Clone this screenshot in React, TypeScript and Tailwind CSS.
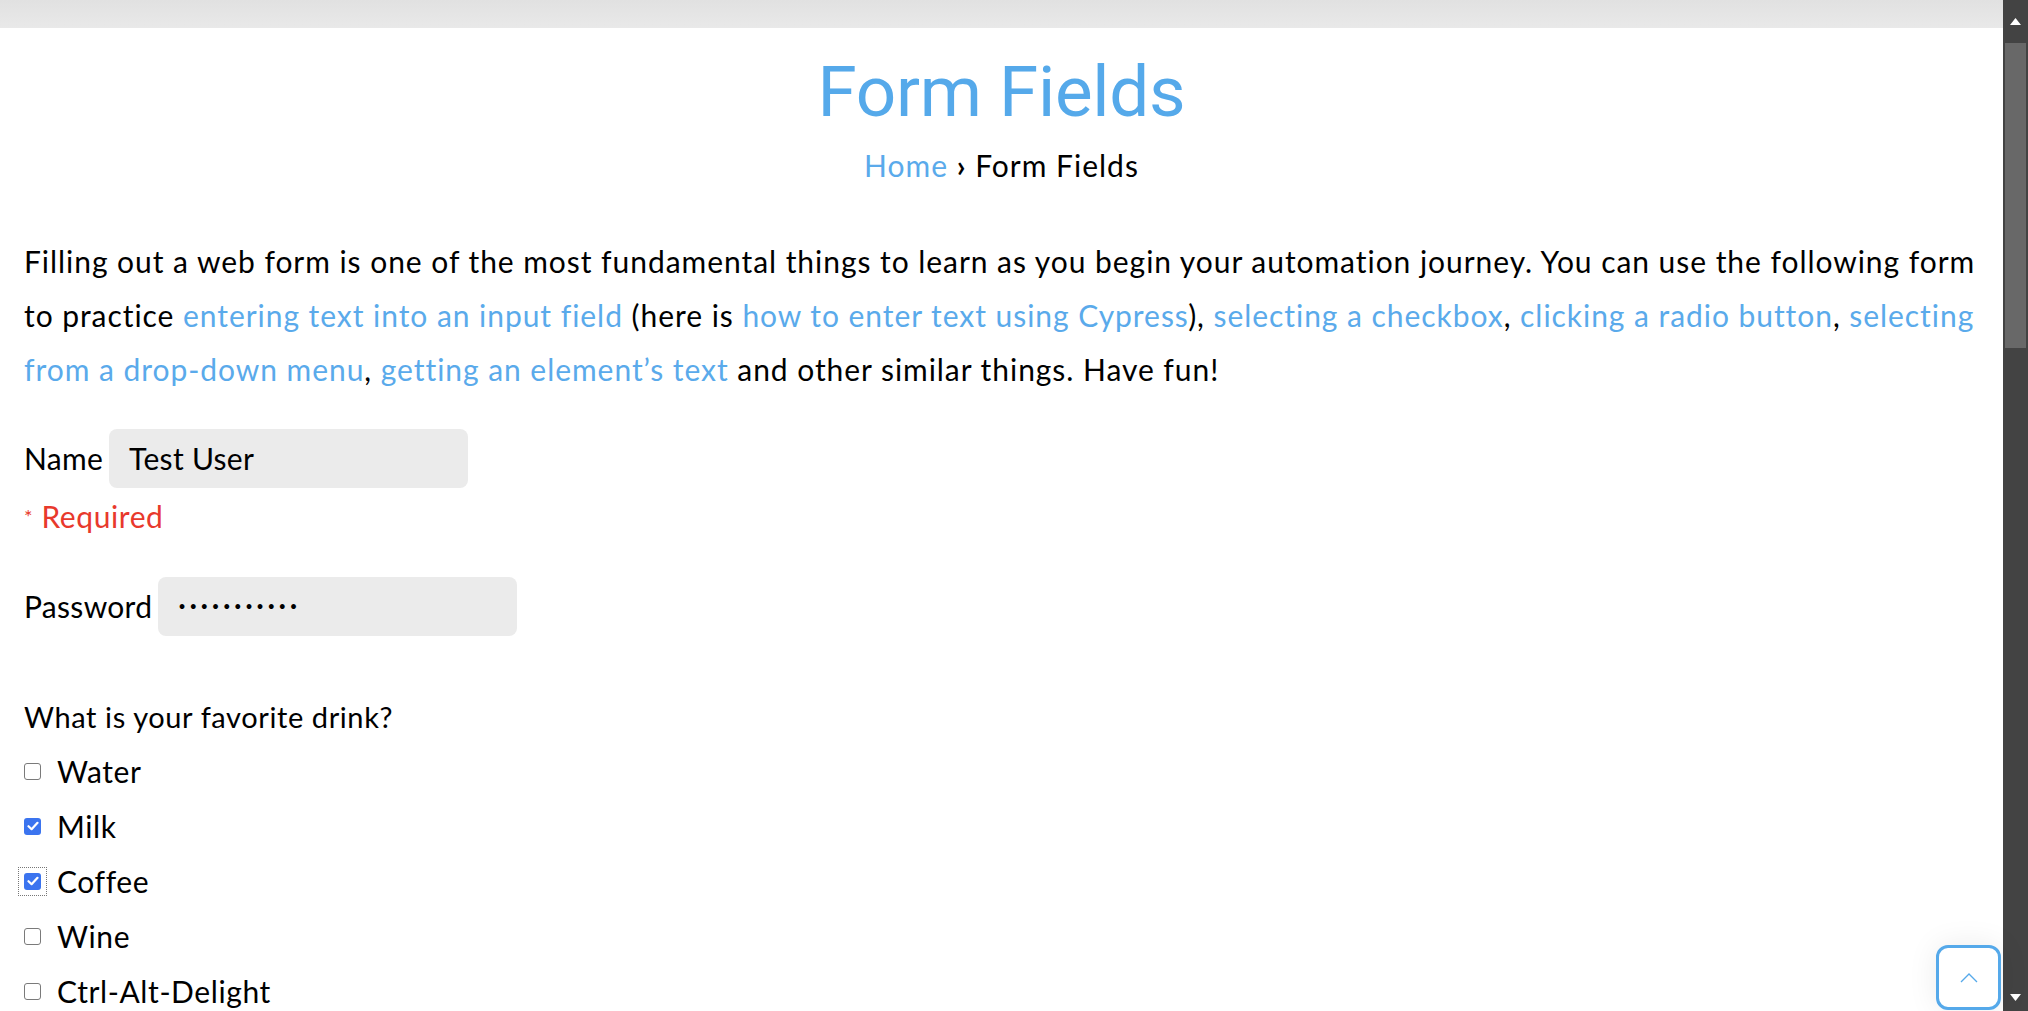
import React from 'react';

const body = { fontFamily: '"Lato", "Liberation Sans", sans-serif' };
const head = { fontFamily: 'Roboto, "Open Sans", sans-serif' };

function Link({ children }: { children: React.ReactNode }) {
  return <a className="text-[#5aaaeb]">{children}</a>;
}

function Check({ checked, focused }: { checked?: boolean; focused?: boolean }) {
  return (
    <span
      className={`flex items-center justify-center w-[27px] h-[27px] -ml-[5px] ${
        focused ? 'outline outline-1 outline-dotted outline-[#777]' : ''
      }`}
    >
      {checked ? (
        <span className="flex items-center justify-center w-[17px] h-[17px] rounded-[3px] bg-[#3b74ef]">
          <svg width="12" height="10" viewBox="0 0 12 10">
            <path d="M1.5 5.2 L4.6 8.2 L10.5 1.8" fill="none" stroke="white" strokeWidth="2.2" strokeLinecap="round" strokeLinejoin="round" />
          </svg>
        </span>
      ) : (
        <span className="w-[17px] h-[17px] rounded-[3px] border-[1.5px] border-[#7a7a7a] bg-white" />
      )}
    </span>
  );
}

export default function App() {
  const drinks = [
    { label: 'Water' },
    { label: 'Milk', checked: true },
    { label: 'Coffee', checked: true, focused: true },
    { label: 'Wine' },
    { label: 'Ctrl-Alt-Delight' },
  ];

  return (
    <div className="flex w-full h-[1011px] overflow-hidden bg-white text-black" style={body}>
      <div className="flex-1 flex flex-col relative">
        <div className="h-[28px] shrink-0 bg-gradient-to-b from-[#e1e1e1] to-[#e9e9e9]" />

        <div className="px-[24px] shrink-0">
          <h1 className="text-center text-[71px] leading-[74px] mt-[27px] text-[#55a9ea] tracking-[-0.3px]" style={head}>
            Form Fields
          </h1>
          <div className="text-center text-[30px] leading-[40px] mt-[16px] tracking-[1px]">
            <Link>Home</Link> <span className="font-bold">›</span> Form Fields
          </div>

          <p className="mt-[49px] text-[30px] leading-[54px] tracking-[0.95px]">
            Filling out a web form is one of the most fundamental things to learn as you begin your automation
            journey. You can use the following form to practice <Link>entering text into an input field</Link> (here
            is <Link>how to enter text using Cypress</Link>), <Link>selecting a checkbox</Link>,{' '}
            <Link>clicking a radio button</Link>, <Link>selecting from a drop-down menu</Link>,{' '}
            <Link>getting an element’s text</Link> and other similar things. Have fun!
          </p>

          <div className="mt-[33px] flex items-center gap-[6px] text-[30px] tracking-[0.3px]">
            <span>Name</span>
            <div className="w-[359px] h-[59px] rounded-[8px] bg-[#ebebeb] flex items-center px-[20px]">Test User</div>
          </div>
          <div className="text-[#e8392c] text-[30px] leading-[40px] mt-[8px] tracking-[0.6px]">
            <span className="text-[20px] align-top">*</span> Required
          </div>

          <div className="mt-[41px] flex items-center gap-[6px] text-[30px] tracking-[0.3px]">
            <span>Password</span>
            <div className="w-[359px] h-[59px] rounded-[8px] bg-[#ebebeb] flex items-center px-[20px] text-[13px] tracking-[3.6px]">
              •••••••••••
            </div>
          </div>

          <div className="mt-[61px] text-[29px] leading-[40px] tracking-[0.6px]">What is your favorite drink?</div>
          <div className="mt-[14px] flex flex-col gap-[15px]">
            {drinks.map((d) => (
              <div key={d.label} className="flex items-center gap-[11px] text-[30px] leading-[40px] tracking-[0.6px]">
                <Check checked={d.checked} focused={d.focused} />
                <span>{d.label}</span>
              </div>
            ))}
          </div>
        </div>

        <button className="absolute right-[2px] bottom-[1px] w-[65px] h-[65px] rounded-[12px] border-[3px] border-[#55a9ea] bg-white shadow-[0_0_30px_rgba(0,0,0,0.08)] flex items-center justify-center">
          <svg width="18" height="10" viewBox="0 0 18 10">
            <path d="M1 9 L9 1 L17 9" fill="none" stroke="#55a9ea" strokeWidth="1.3" />
          </svg>
        </button>
      </div>

      <div className="w-[25px] shrink-0 bg-[#434343] flex flex-col items-center">
        <div className="h-[43px] shrink-0 flex items-center justify-center">
          <svg width="11" height="7" viewBox="0 0 11 7">
            <path d="M5.5 0 L11 7 L0 7 Z" fill="white" />
          </svg>
        </div>
        <div className="w-[21px] h-[305px] shrink-0 bg-[#686868]" />
        <div className="flex-1" />
        <div className="h-[28px] shrink-0 flex items-center justify-center">
          <svg width="11" height="7" viewBox="0 0 11 7">
            <path d="M0 0 L11 0 L5.5 7 Z" fill="white" />
          </svg>
        </div>
      </div>
    </div>
  );
}
